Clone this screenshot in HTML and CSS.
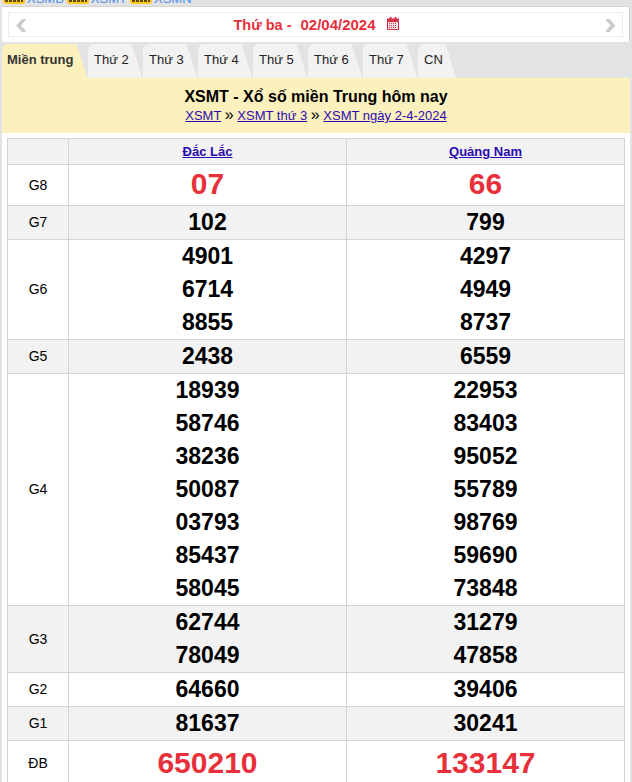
FILE: index.html
```html
<!DOCTYPE html>
<html lang="vi">
<head>
<meta charset="utf-8">
<title>XSMT</title>
<link rel="stylesheet" href="styles.css">
</head>
<body>
<div class="page">
  <div class="topstrip">
    <span class="new"><span class="new-marks"></span></span><a class="toplink">XSMB</a>
    <span class="new"><span class="new-marks"></span></span><a class="toplink">XSMT</a>
    <span class="new"><span class="new-marks"></span></span><a class="toplink">XSMN</a>
  </div>
  <div class="datebar">
    <div class="datebar-inner">
      <svg class="chev" width="10" height="13" viewBox="0 0 10 13"><path d="M6 0 L9.5 0 L9.5 1.5 L5 6.5 L9.5 11.5 L9.5 13 L6 13 L0 6.5 Z" fill="#cccccc"/></svg>
      <div class="date">
        <span class="date-day">Thứ ba -</span>
        <span class="date-val">02/04/2024</span>
        <svg class="cal" width="12" height="13" viewBox="0 0 12 13">
          <rect x="0.5" y="2" width="11" height="10.5" fill="#f7dfe2" stroke="#d9304a"/>
          <rect x="0" y="2" width="12" height="3" fill="#d9304a"/>
          <rect x="2.5" y="0" width="2" height="3" fill="#d9304a"/>
          <rect x="7.5" y="0" width="2" height="3" fill="#d9304a"/>
          <path d="M2 6.5h8M2 8.5h8M2 10.5h8" stroke="#d9304a" stroke-dasharray="1 1" fill="none"/>
        </svg>
      </div>
      <svg class="chev" width="10" height="13" viewBox="0 0 10 13"><path d="M3.5 0 L0 0 L0 1.5 L4.5 6.5 L0 11.5 L0 13 L3.5 13 L9.5 6.5 Z" fill="#cccccc"/></svg>
    </div>
  </div>
  <ul class="tabs">
    <li class="tab tab-active">Miền trung</li>
    <li class="tab">Thứ 2</li>
    <li class="tab">Thứ 3</li>
    <li class="tab">Thứ 4</li>
    <li class="tab">Thứ 5</li>
    <li class="tab">Thứ 6</li>
    <li class="tab">Thứ 7</li>
    <li class="tab">CN</li>
  </ul>
  <div class="heading">
    <h1 class="title">XSMT - Xổ số miền Trung hôm nay</h1>
    <div class="crumbs"><a href="#">XSMT</a> <span class="sep">»</span> <a href="#">XSMT thứ 3</a> <span class="sep">»</span> <a href="#">XSMT ngày 2-4-2024</a></div>
  </div>
  <div class="panel">
    <table class="results">
      <colgroup><col class="c-label"><col class="c-val"><col class="c-val"></colgroup>
      <tr class="head alt"><th></th><th><a href="#">Đắc Lắc</a></th><th><a href="#">Quảng Nam</a></th></tr>
      <tr class="big"><td class="lbl">G8</td><td><div class="num">07</div></td><td><div class="num">66</div></td></tr>
      <tr class="alt"><td class="lbl">G7</td><td><div class="num">102</div></td><td><div class="num">799</div></td></tr>
      <tr><td class="lbl">G6</td><td><div class="num">4901<br>6714<br>8855</div></td><td><div class="num">4297<br>4949<br>8737</div></td></tr>
      <tr class="alt"><td class="lbl">G5</td><td><div class="num">2438</div></td><td><div class="num">6559</div></td></tr>
      <tr><td class="lbl">G4</td><td><div class="num">18939<br>58746<br>38236<br>50087<br>03793<br>85437<br>58045</div></td><td><div class="num">22953<br>83403<br>95052<br>55789<br>98769<br>59690<br>73848</div></td></tr>
      <tr class="alt"><td class="lbl">G3</td><td><div class="num">62744<br>78049</div></td><td><div class="num">31279<br>47858</div></td></tr>
      <tr><td class="lbl">G2</td><td><div class="num">64660</div></td><td><div class="num">39406</div></td></tr>
      <tr class="alt"><td class="lbl">G1</td><td><div class="num">81637</div></td><td><div class="num">30241</div></td></tr>
      <tr class="big last"><td class="lbl">ĐB</td><td><div class="num">650210</div></td><td><div class="num">133147</div></td></tr>
    </table>
  </div>
</div>
</body>
</html>
```
FILE: styles.css
```css
* { box-sizing: border-box; }
html, body { margin: 0; padding: 0; }
body {
  background: #e2e3e5;
  font-family: "Liberation Sans", Arial, sans-serif;
  color: #000;
  overflow: hidden;
}
.page { padding: 0 2px; }
.topstrip {
  height: 4px;
  display: flex;
  align-items: flex-end;
  padding-left: 1px;
  margin-bottom: 2px;
  overflow: hidden;
}
.new {
  width: 22px;
  height: 11px;
  margin-right: 2px;
  background: #ffc81e;
  border-radius: 3px;
  flex: none;
  display: flex;
  align-items: flex-end;
  padding: 0 2px 2px;
}
.new-marks {
  display: block;
  width: 100%;
  height: 2px;
  background: repeating-linear-gradient(90deg, #5a4a10 0 3px, #ffc81e 3px 4px);
}
.toplink {
  font-size: 13px;
  line-height: 14px;
  margin-bottom: -2px;
  margin-right: 3px;
  color: #4d8fe8;
  flex: none;
}
.datebar {
  background: #fff;
  height: 36px;
  padding: 6px;
  border-top: 1px solid #d8d4cc;
  border-right: 1px solid #d8d4cc;
  width: 628px;
}
.datebar-inner {
  height: 25px;
  margin-top: -1px;
  border: 1px solid #eeeeee;
  display: flex;
  align-items: center;
  justify-content: space-between;
  padding: 0 6px 0 7px;
}
.chev { flex: none; margin-top: 1px; }
.date {
  display: flex;
  align-items: center;
  color: #e8303a;
  font-size: 15px;
  font-weight: bold;
}
.date-day { margin-right: 9px; font-size: 14.5px; }
.date-val { margin-right: 11px; }
.cal { margin-top: -3px; }
.tabs {
  list-style: none;
  margin: 2px 0 0;
  padding: 0;
  display: flex;
  height: 34px;
}
.tab {
  position: relative;
  width: 55px;
  height: 34px;
  padding-left: 6px;
  font-size: 13px;
  line-height: 32px;
  color: #222;
}
.tab:last-child { width: 39px; }
.tab::before {
  content: "";
  position: absolute;
  z-index: -1;
  left: 0;
  top: 0;
  bottom: 0;
  right: 11px;
  background: #f2f2f2;
  border-radius: 6px 0 0 0;
}
.tab::after {
  content: "";
  position: absolute;
  z-index: -1;
  top: 0;
  bottom: 0;
  right: 6px;
  width: 14px;
  background: #f2f2f2;
  border-radius: 0 6px 0 0;
  transform: skewX(17deg);
}
.tab-active {
  width: 86px;
  padding-left: 5px;
  font-weight: bold;
  color: #333;
}
.tab-active::before, .tab-active::after { background: #fcf0bd; }
.heading {
  background: #fcf0bd;
  height: 55px;
  width: 628px;
  padding-top: 9px;
  text-align: center;
}
.title {
  margin: 0;
  font-size: 16px;
  line-height: 19px;
  font-weight: bold;
}
.crumbs {
  font-size: 13px;
  line-height: 19px;
}
.sep { font-size: 16px; line-height: 16px; }
.crumbs a, .results a { color: #2a0bb0; text-decoration: underline; }
.panel {
  background: #fff;
  width: 628px;
  padding: 5px 5px 0;
}
.results {
  border-collapse: collapse;
  table-layout: fixed;
  width: 618px;
  text-align: center;
}
.c-label { width: 61px; }
.results th, .results td {
  border: 1px solid #d8d4cc;
  padding: 0;
}
.results td {
  font-size: 23px;
  line-height: 33px;
  font-weight: bold;
}
.results th {
  height: 26px;
  font-size: 13px;
  line-height: 25px;
  font-weight: bold;
}
.results td.lbl {
  font-size: 14px;
  font-weight: normal;
}
.alt td, .alt th { background: #f2f2f2; }
.big td {
  font-size: 30px;
  line-height: 40px;
  color: #e8303a;
}
.big .num {
  margin-top: -1px;
  margin-bottom: 1px;
}
.big td.lbl { color: #000; }
.last td { line-height: 45px; }
```
